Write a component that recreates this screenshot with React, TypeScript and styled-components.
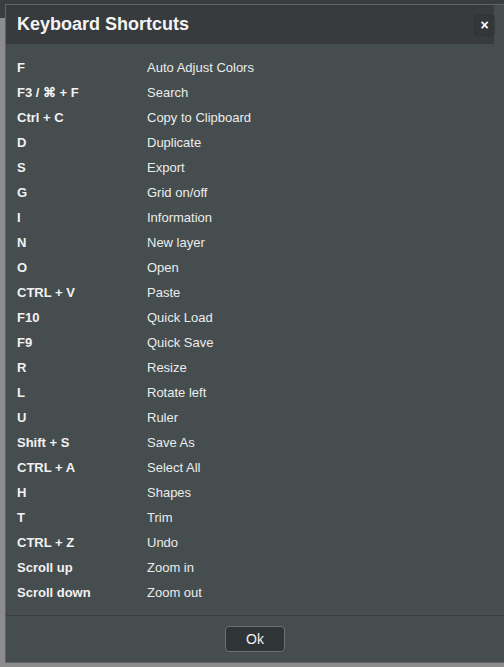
import styled, { createGlobalStyle } from "styled-components";

const GlobalStyle = createGlobalStyle`
  html, body {
    margin: 0;
    padding: 0;
    height: 100%;
  }
  body {
    background: #8c8c8c;
    font-family: "Liberation Sans", Arial, sans-serif;
    overflow: hidden;
  }
`;

const shortcuts: [string, string][] = [
  ["F", "Auto Adjust Colors"],
  ["F3 / ⌘ + F", "Search"],
  ["Ctrl + C", "Copy to Clipboard"],
  ["D", "Duplicate"],
  ["S", "Export"],
  ["G", "Grid on/off"],
  ["I", "Information"],
  ["N", "New layer"],
  ["O", "Open"],
  ["CTRL + V", "Paste"],
  ["F10", "Quick Load"],
  ["F9", "Quick Save"],
  ["R", "Resize"],
  ["L", "Rotate left"],
  ["U", "Ruler"],
  ["Shift + S", "Save As"],
  ["CTRL + A", "Select All"],
  ["H", "Shapes"],
  ["T", "Trim"],
  ["CTRL + Z", "Undo"],
  ["Scroll up", "Zoom in"],
  ["Scroll down", "Zoom out"],
];

export default function App() {
  return (
    <>
      <GlobalStyle />
      <TopBar />
      <Dialog>
        <Header>
          <Title>Keyboard Shortcuts</Title>
          <CloseButton aria-label="Close">×</CloseButton>
        </Header>
        <Body>
          {shortcuts.map(([key, label]) => (
            <Row key={key}>
              <Key>{key}</Key>
              <Label>{label}</Label>
            </Row>
          ))}
        </Body>
        <Footer>
          <OkButton>Ok</OkButton>
        </Footer>
      </Dialog>
    </>
  );
}

const TopBar = styled.div`
  height: 18px;
  background: #3a3d40;
`;

const Dialog = styled.div`
  position: absolute;
  left: 5px;
  top: 4px;
  width: 520px;
  height: 659px;
  box-sizing: border-box;
  border: 1px solid #5f6365;
  background: #464d4f;
  display: flex;
  flex-direction: column;
`;

const Header = styled.div`
  height: 39px;
  background: #373b3e;
  display: flex;
  align-items: center;
  padding: 0 0 0 11px;
  width: 488px;
  box-sizing: border-box;
  justify-content: space-between;
`;

const Title = styled.h1`
  margin: 0;
  font-size: 18px;
  font-weight: bold;
  color: #f4f4f4;
`;

const CloseButton = styled.button`
  width: 19px;
  height: 19px;
  padding: 0;
  margin-top: 1px;
  border: none;
  border-radius: 3px;
  background: #33373a;
  box-shadow: 0 0 2px rgba(0, 0, 0, 0.5);
  color: #ffffff;
  font-family: "Liberation Sans", Arial, sans-serif;
  font-size: 14px;
  font-weight: bold;
  line-height: 19px;
`;

const Body = styled.div`
  flex: 1;
  padding: 11px 0 0 11px;
`;

const Row = styled.div`
  display: flex;
  height: 25px;
  line-height: 25px;
  font-size: 13px;
`;

const Key = styled.span`
  width: 130px;
  font-weight: bold;
  color: #f2f2f2;
`;

const Label = styled.span`
  color: #ececec;
`;

const Footer = styled.div`
  height: 47px;
  border-top: 1px solid #393e40;
  display: flex;
  align-items: center;
  width: 498px;
  justify-content: center;
  padding-bottom: 1px;
  box-sizing: border-box;
`;

const OkButton = styled.button`
  width: 60px;
  height: 26px;
  border: 1px solid #6c7072;
  border-radius: 4px;
  background: #2f3436;
  color: #f0f0f0;
  font-family: "Liberation Sans", Arial, sans-serif;
  font-size: 14px;
`;
